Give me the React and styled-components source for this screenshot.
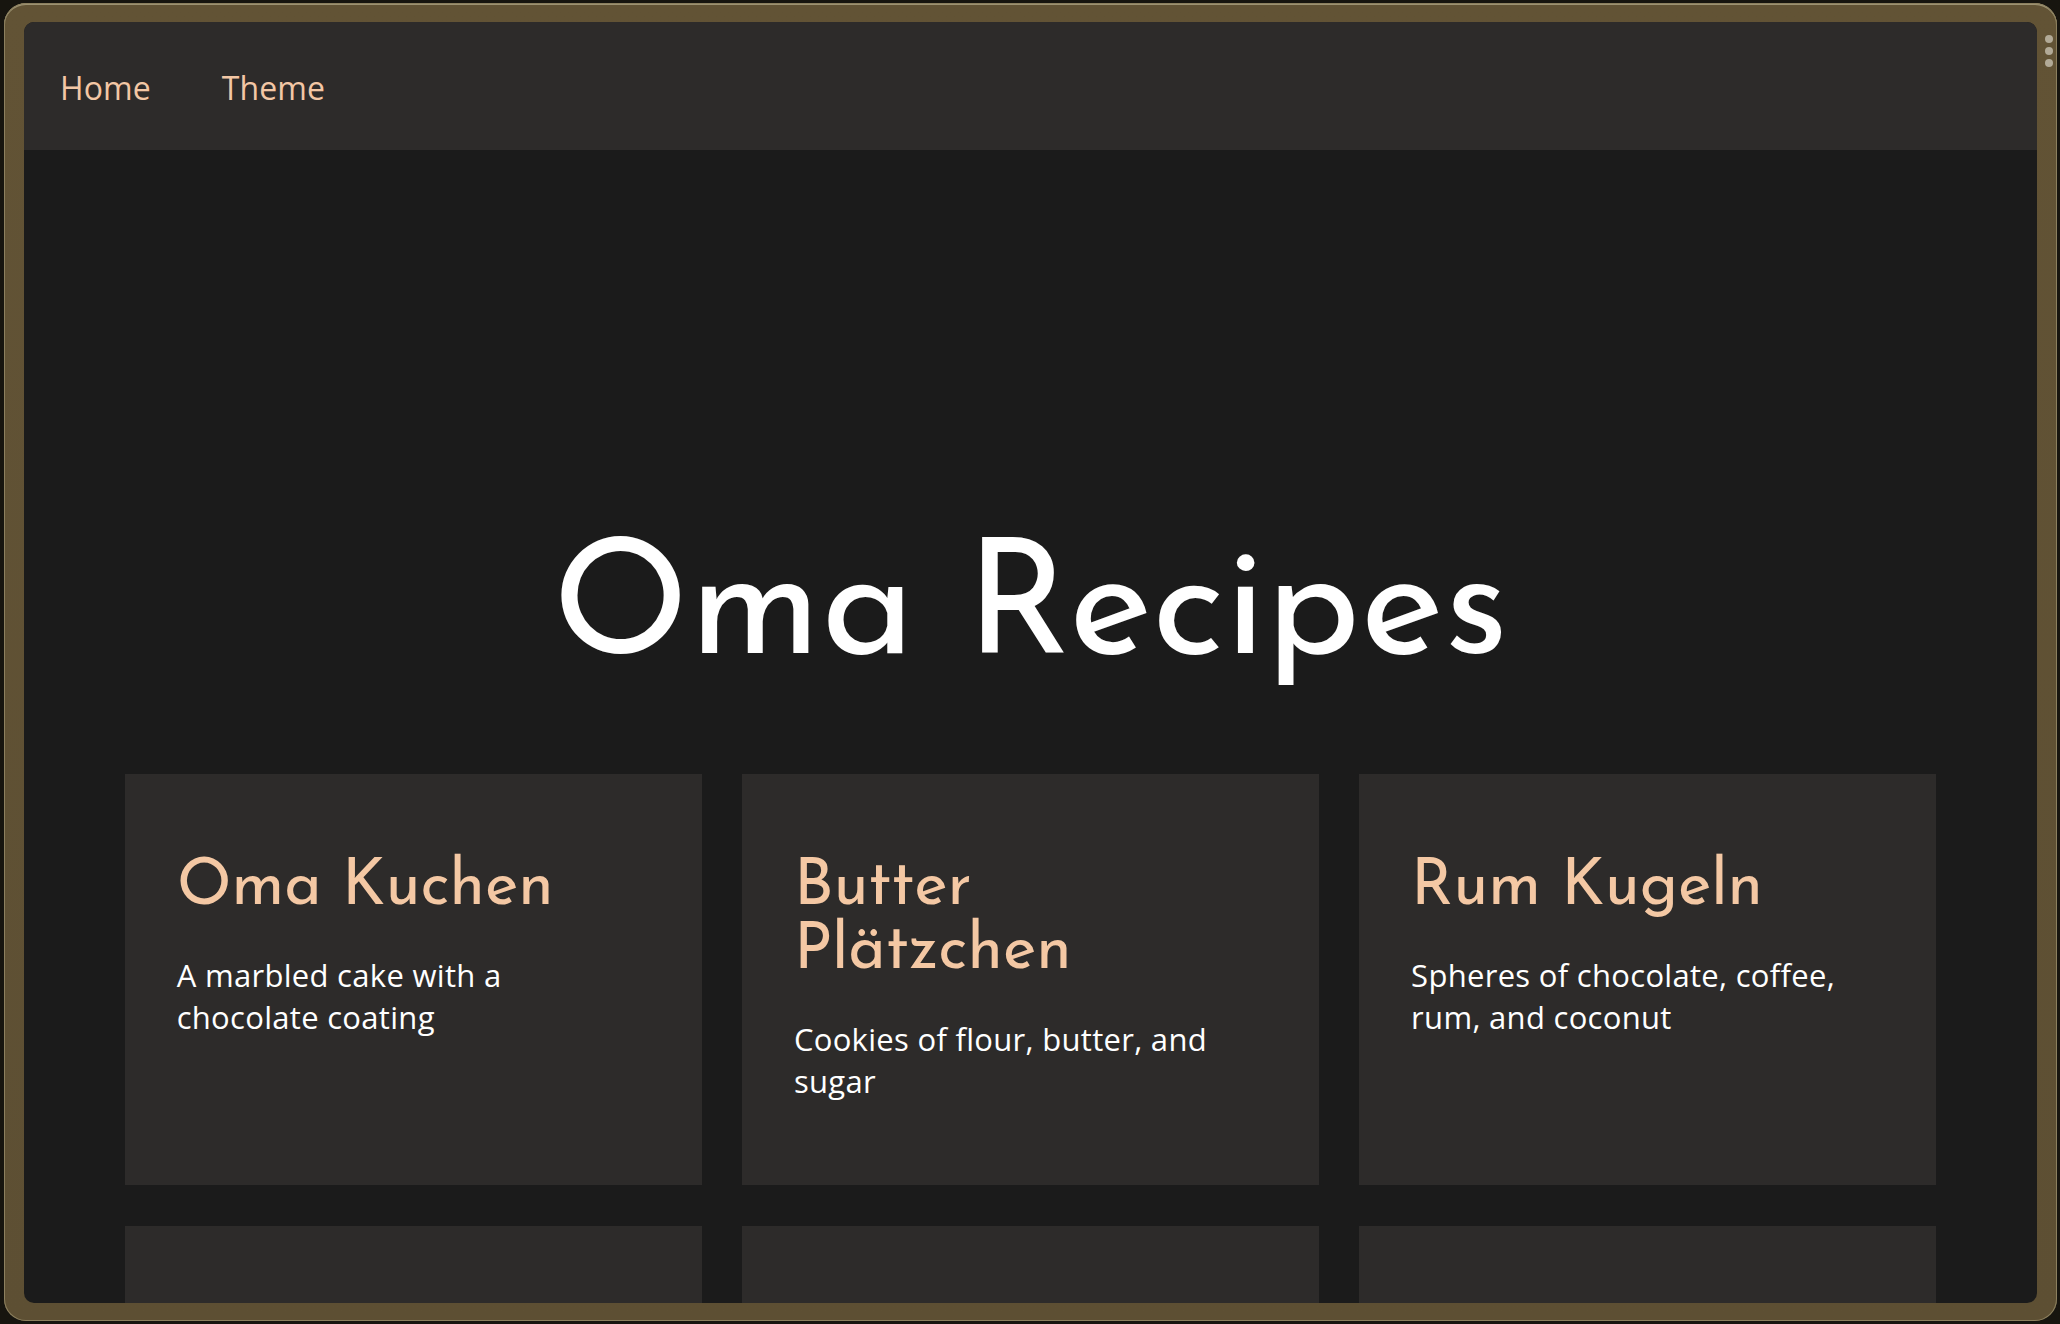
import React from "react";
import styled, { createGlobalStyle } from "styled-components";

const GlobalStyle = createGlobalStyle`
  html, body {
    margin: 0;
    padding: 0;
    height: 100%;
    background: #17150f;
  }
  body {
    padding: 3px 3px 3px 4px;
    box-sizing: border-box;
    overflow: hidden;
  }
  #root { height: 100%; }
  * { box-sizing: border-box; }
`;

const Frame = styled.div`
  position: relative;
  height: 100%;
  padding: 19px 20px 18px 20px;
  border-radius: 22px;
  background: linear-gradient(180deg, #625335 0%, #5d4f33 100%);
  box-shadow: inset 0 0 0 1px #8c805f, inset 0 2px 0 #9d9272;
`;

const Handle = styled.div`
  position: absolute;
  right: 4px;
  top: 32px;
  display: flex;
  flex-direction: column;
  gap: 4px;
`;

const Dot = styled.span`
  width: 8px;
  height: 8px;
  border-radius: 50%;
  background: #b2aa97;
`;

const Screen = styled.div`
  height: 100%;
  border-radius: 10px;
  overflow: hidden;
  background: #1b1b1b;
  display: flex;
  flex-direction: column;
`;

const Nav = styled.nav`
  flex: none;
  height: 128px;
  background: #2d2b2a;
  display: flex;
  align-items: center;
  gap: 71px;
  padding: 2px 0 0 36px;
`;

const NavLink = styled.a`
  font-family: "Open Sans", sans-serif;
  font-size: 32px;
  letter-spacing: 0.1px;
  color: #f3c7a5;
  text-decoration: none;
`;

const Title = styled.h1`
  margin: 383px 0 81px;
  text-align: center;
  font-family: "Josefin Sans", Lato, sans-serif;
  font-weight: 400;
  font-size: 160px;
  line-height: 160px;
  letter-spacing: 0;
  color: #ffffff;
`;

const Grid = styled.div`
  width: 90%;
  margin: 0 auto;
  display: grid;
  grid-template-columns: repeat(3, 1fr);
  column-gap: 40px;
  row-gap: 41px;
`;

const Card = styled.article`
  background: #2d2b2a;
  padding: 82px 52px 83px 52px;
  min-height: 411px;
`;

const CardTitle = styled.h2`
  margin: 0 0 34px;
  font-family: "Josefin Sans", Lato, sans-serif;
  font-weight: 400;
  font-size: 64px;
  line-height: 64px;
  letter-spacing: 0;
  color: #f4c8a4;
`;

const CardText = styled.p`
  margin: 0;
  font-family: "Open Sans", sans-serif;
  font-size: 31px;
  line-height: 42px;
  letter-spacing: 0.3px;
  color: #ffffff;
`;

const recipes = [
  { id: 1, title: "Oma Kuchen", text: "A marbled cake with a chocolate coating" },
  { id: 2, title: "Butter Plätzchen", text: "Cookies of flour, butter, and sugar" },
  { id: 3, title: "Rum Kugeln", text: "Spheres of chocolate, coffee, rum, and coconut" },
  { id: 4 },
  { id: 5 },
  { id: 6 },
];

export default function App() {
  return (
    <>
      <GlobalStyle />
      <Frame>
        <Screen>
          <Nav>
            <NavLink href="#">Home</NavLink>
            <NavLink href="#">Theme</NavLink>
          </Nav>
          <Title>Oma Recipes</Title>
          <Grid>
            {recipes.map((r) => (
              <Card key={r.id}>
                {r.title && <CardTitle>{r.title}</CardTitle>}
                {r.text && <CardText>{r.text}</CardText>}
              </Card>
            ))}
          </Grid>
        </Screen>
        <Handle>
          <Dot />
          <Dot />
          <Dot />
        </Handle>
      </Frame>
    </>
  );
}
